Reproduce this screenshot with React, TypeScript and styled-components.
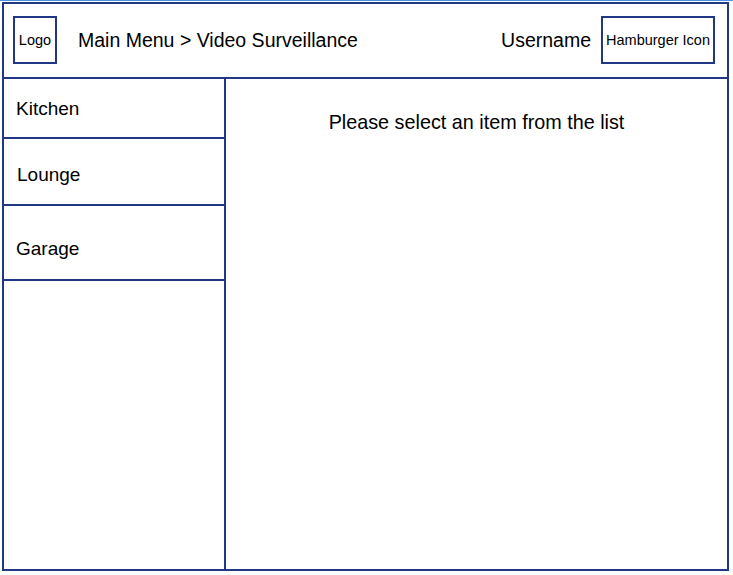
import React from 'react';
import styled, { createGlobalStyle } from 'styled-components';

const GlobalStyle = createGlobalStyle`
  html, body {
    margin: 0;
    padding: 0;
    background: #ffffff;
    font-family: "Liberation Sans", Arial, sans-serif;
  }
  body {
    border-top: 1px solid #4a8ee8;
  }
`;

const navy = '#1f3784';

const Frame = styled.div`
  margin: 1px 0 0 2px;
  width: 727px;
  height: 569px;
  box-sizing: border-box;
  border: 2px solid ${navy};
  display: flex;
  flex-direction: column;
  color: #000;
`;

const Header = styled.header`
  height: 75px;
  box-sizing: border-box;
  border-bottom: 2px solid ${navy};
  display: flex;
  align-items: center;
  padding: 0 12px 0 9px;
`;

const Box = styled.div<{ $w: number }>`
  width: ${p => p.$w}px;
  height: 48px;
  margin-bottom: 1px;
  box-sizing: border-box;
  border: 2px solid ${navy};
  display: flex;
  align-items: center;
  justify-content: center;
  font-size: 14.5px;
  white-space: nowrap;
  overflow: hidden;
`;

const Crumbs = styled.div`
  margin-left: 21px;
  font-size: 19.5px;
  flex: 1;
`;

const Username = styled.div`
  font-size: 19.5px;
  margin-right: 10px;
`;

const Body = styled.div`
  flex: 1;
  display: flex;
  min-height: 0;
`;

const Sidebar = styled.nav`
  width: 220px;
  border-right: 2px solid ${navy};
  display: flex;
  flex-direction: column;
`;

const Item = styled.div<{ $h: number; $top: number; $left: number }>`
  height: ${p => p.$h}px;
  box-sizing: border-box;
  border-bottom: 2px solid ${navy};
  display: flex;
  align-items: center;
  padding: ${p => p.$top}px 0 0 ${p => p.$left}px;
  font-size: 19px;
`;

const Content = styled.main`
  flex: 1;
  display: flex;
  justify-content: center;
  padding-top: 32px;
  font-size: 19.8px;
`;

const items = [
  { label: 'Kitchen', h: 60, top: 2, left: 12 },
  { label: 'Lounge', h: 67, top: 6, left: 13 },
  { label: 'Garage', h: 75, top: 12, left: 12 },
];

export default function App() {
  return (
    <>
      <GlobalStyle />
      <Frame>
        <Header>
          <Box $w={44}>Logo</Box>
          <Crumbs>Main Menu &gt; Video Surveillance</Crumbs>
          <Username>Username</Username>
          <Box $w={114}>Hamburger Icon</Box>
        </Header>
        <Body>
          <Sidebar>
            {items.map(it => (
              <Item key={it.label} $h={it.h} $top={it.top} $left={it.left}>
                {it.label}
              </Item>
            ))}
          </Sidebar>
          <Content>Please select an item from the list</Content>
        </Body>
      </Frame>
    </>
  );
}
